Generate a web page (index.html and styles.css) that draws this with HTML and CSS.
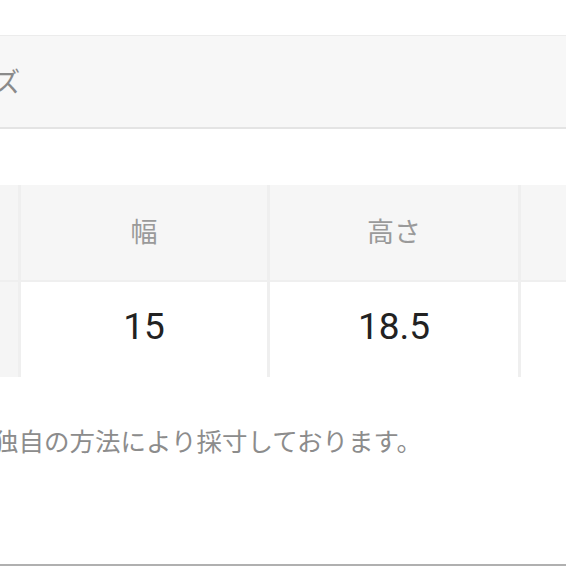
FILE: index.html
```html
<!DOCTYPE html>
<html lang="ja">
<head>
<meta charset="utf-8">
<link rel="stylesheet" href="styles.css">
</head>
<body>
<div class="page">
  <div class="top-space"></div>
  <div class="band"><span class="band-title">サイズ</span></div>
  <div class="size-table">
    <div class="cell label"></div>
    <div class="cell head">幅</div>
    <div class="cell head">高さ</div>
    <div class="cell head">マチ</div>
    <div class="cell label"></div>
    <div class="cell value">15</div>
    <div class="cell value">18.5</div>
    <div class="cell value">5</div>
  </div>
  <p class="note">独自の方法により採寸しております。</p>
  <div class="bottom-line"></div>
</div>
</body>
</html>
```
FILE: styles.css
```css
html, body {
  margin: 0;
  padding: 0;
  background: #ffffff;
  overflow: hidden;
}
.page {
  width: 566px;
  height: 566px;
  display: flex;
  flex-direction: column;
  font-family: "Noto Sans CJK JP", "Roboto", sans-serif;
  overflow: hidden;
}
.top-space {
  height: 35px;
  flex: none;
}
.band {
  flex: none;
  height: 91px;
  background: #f7f7f7;
  border-top: 1px solid #ececec;
  border-bottom: 2px solid #e4e4e4;
  display: flex;
  align-items: center;
  overflow: hidden;
}
.band-title {
  margin-left: -60px;
  font-size: 27px;
  color: #8a8a8a;
  white-space: nowrap;
  line-height: 1;
  padding-bottom: 3px;
}
.size-table {
  flex: none;
  margin-top: 56px;
  display: grid;
  grid-template-columns: 18px 246px 248px 248px;
  grid-template-rows: 95px 95px;
  column-gap: 3px;
  row-gap: 2px;
  background: #efefef;
  width: 769px;
}
.cell {
  display: flex;
  align-items: center;
  justify-content: center;
  white-space: nowrap;
  overflow: hidden;
}
.label {
  background: #f5f5f5;
}
.head {
  background: #f6f6f6;
  color: #9a9a9a;
  font-size: 27px;
  padding-bottom: 5px;
}
.value {
  background: #ffffff;
  color: #222222;
  font-family: "Roboto", "Noto Sans CJK JP", sans-serif;
  font-size: 37px;
  padding-bottom: 6px;
}
.note {
  flex: none;
  margin: 46px 0 0 -7px;
  font-size: 25.5px;
  line-height: 34px;
  color: #8c8c8c;
  white-space: nowrap;
}
.bottom-line {
  flex: 1;
  border-bottom: 2px solid #b0b0b0;
}
```
